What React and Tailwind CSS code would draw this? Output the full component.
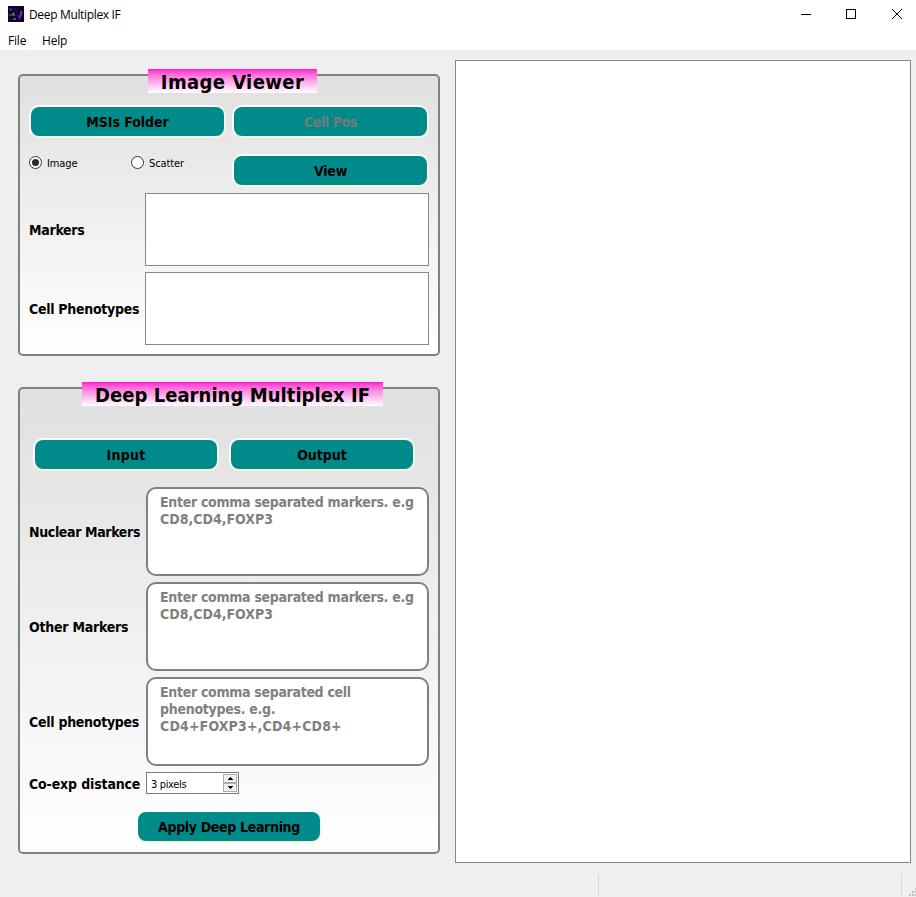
import React from "react";

const UI = "font-['Open_Sans','Noto_Sans',sans-serif]";
const TAHOMA = "font-['DejaVu_Sans_Condensed','DejaVu_Sans',sans-serif]";

function PushButton({ children, className = "", disabled = false }) {
  return (
    <button
      disabled={disabled}
      className={`flex h-[33px] items-center justify-center rounded-[10px] border-2 border-t-white border-l-white border-r-[#f7f6de] border-b-[#f7f6de] bg-[#008b8b] pt-[2px] text-[14px] font-bold whitespace-nowrap ${disabled ? "text-[#787878]" : "text-black"} ${className}`}
    >
      {children}
    </button>
  );
}

function GroupTitle({ children, className }) {
  return (
    <h2
      className={`relative z-10 flex h-6 items-center justify-center bg-linear-to-b from-[#ff0ace] to-white pt-[2px] text-[20px] font-bold whitespace-nowrap ${className}`}
    >
      {children}
    </h2>
  );
}

function Label({ children, className = "" }) {
  return (
    <div className={`shrink-0 pt-px text-[14px] leading-5 font-bold whitespace-nowrap ${className}`}>
      {children}
    </div>
  );
}

function Radio({ children, checked = false, className = "" }) {
  return (
    <div className={`mt-[2px] flex h-[13px] items-center gap-[5px] ${className}`}>
      <span className="flex size-[13px] items-center justify-center rounded-full border border-[#333] bg-white">
        {checked && <span className="size-[7px] rounded-full bg-[#2b2b2b]" />}
      </span>
      <span className="pt-[2px] text-[11px] leading-[13px] tracking-[-0.1px]">{children}</span>
    </div>
  );
}

function TextBox({ children }) {
  return (
    <div className="h-[89px] w-[283px] shrink-0 rounded-[10px] border-2 border-[#808080] bg-white px-3 pt-[5px] text-[14px] leading-[17px] font-bold whitespace-nowrap text-[#808080]">
      {children}
    </div>
  );
}

function MarkersHint() {
  return (
    <>
      <p className="tracking-[-0.3px]">Enter comma separated markers. e.g</p>
      <p>CD8,CD4,FOXP3</p>
    </>
  );
}

function ListBox() {
  return <div className="h-[73px] w-[284px] border border-[#828790] bg-white" />;
}

function AppIcon() {
  return (
    <svg width="16" height="16" viewBox="0 0 16 16" className="-mt-0.5">
      <rect width="16" height="16" fill="#0c0626" />
      <path d="M6 3l3 1M9 8l1 2M1 13l2 1M10 13l3 1" stroke="#1f1555" strokeWidth="2" />
      <path d="M1.5 2.5l2.5 2M1 8l1.5 2" stroke="#7a1aa0" strokeWidth="1.8" />
      <path d="M13.5 5l-.8 4-1.7 3" stroke="#9a26d4" strokeWidth="1.8" fill="none" />
      <path d="M3.5 9.5l2-2 1 2.5M5 13h3" stroke="#54805a" strokeWidth="1.7" fill="none" />
    </svg>
  );
}

function TitleBar() {
  return (
    <header className={`h-[50px] bg-white text-[12px] ${UI}`}>
      <div className="flex h-[30px] items-center pl-2">
        <AppIcon />
        <span className="ml-[5px] tracking-[-0.34px]">Deep Multiplex IF</span>
        <svg
          width="102"
          height="11"
          viewBox="0 0 102 11"
          className="mr-[13px] mb-px ml-auto"
          fill="none"
          stroke="#000"
          shapeRendering="crispEdges"
        >
          <path d="M0 5.5H10" />
          <rect x="45.5" y="0.5" width="9" height="9" />
          <path d="M91 0L101 10M101 0L91 10" shapeRendering="auto" />
        </svg>
      </div>
      <nav className="flex h-5 items-center pt-[2px] pl-2 tracking-[-0.2px]">
        <span className="w-[34px]">File</span>
        <span>Help</span>
      </nav>
    </header>
  );
}

function SpinBox() {
  return (
    <div className="flex h-[22px] w-[93px] items-center justify-between border border-[#7a7a7a] bg-white pr-px pl-1 text-[11px]">
      <span className="pt-1 tracking-[-0.35px]">3 pixels</span>
      <div className="flex h-[18px] w-[14px] flex-col">
        <span className="flex h-[9px] items-center justify-center border border-[#adadad] bg-[#f0f0f0]">
          <svg width="5" height="3" shapeRendering="crispEdges">
            <path d="M2 0h1v1h1v1h1v1H0V2h1V1h1z" />
          </svg>
        </span>
        <span className="flex h-[9px] items-center justify-center border border-[#adadad] bg-[#f0f0f0]">
          <svg width="5" height="3" shapeRendering="crispEdges">
            <path d="M0 0h5v1H4v1H3v1H2V2H1V1H0z" />
          </svg>
        </span>
      </div>
    </div>
  );
}

export default function App() {
  return (
    <div className={`flex h-[897px] w-[916px] flex-col overflow-hidden bg-[#efefef] text-black ${TAHOMA}`}>
      <TitleBar />
      <main className="flex h-[813px] items-start pt-[10px] pl-[18px]">
        <div className="w-[422px] shrink-0 pt-[9px]">
          <section>
            <GroupTitle className="ml-[130px] w-[169px] tracking-[0.4px]">Image Viewer</GroupTitle>
            <div className="-mt-[19px] h-[282px] rounded-[5px] border-2 border-[#808080] bg-linear-to-b from-[#e0e0e0] to-white pt-[29px] pl-[9px]">
              <div className="flex gap-[6px]">
                <PushButton className="w-[197px] tracking-[-0.04px]">MSIs Folder</PushButton>
                <PushButton className="w-[197px] tracking-[-0.35px]" disabled>Cell Pos</PushButton>
              </div>
              <div className="mt-4 flex">
                <Radio checked className="w-[102px]">Image</Radio>
                <Radio className="w-[101px]">Scatter</Radio>
                <PushButton className="w-[197px] tracking-[-0.2px]">View</PushButton>
              </div>
              <div className="mt-[6px] flex items-center">
                <Label className="w-[116px] tracking-[-0.29px]">Markers</Label>
                <ListBox />
              </div>
              <div className="mt-[6px] flex items-center">
                <Label className="w-[116px] tracking-[-0.29px]">Cell Phenotypes</Label>
                <ListBox />
              </div>
            </div>
          </section>
          <section className="mt-[26px]">
            <GroupTitle className="ml-[64px] w-[301px] tracking-[0.05px]">Deep Learning Multiplex IF</GroupTitle>
            <div className="-mt-[19px] h-[467px] rounded-[5px] border-2 border-[#808080] bg-linear-to-b from-[#e0e0e0] to-white pt-[49px] pl-[9px]">
              <div className="flex gap-[10px] pl-1">
                <PushButton className="w-[186px] tracking-[0.3px]">Input</PushButton>
                <PushButton className="w-[186px]">Output</PushButton>
              </div>
              <div className="mt-4 flex items-center">
                <Label className="w-[117px] tracking-[-0.36px]">Nuclear Markers</Label>
                <TextBox><MarkersHint /></TextBox>
              </div>
              <div className="mt-[6px] flex items-center">
                <Label className="w-[117px] tracking-[-0.23px]">Other Markers</Label>
                <TextBox><MarkersHint /></TextBox>
              </div>
              <div className="mt-[6px] flex items-center">
                <Label className="w-[117px] tracking-[-0.28px]">Cell phenotypes</Label>
                <TextBox>
                  <p className="tracking-[-0.31px]">Enter comma separated cell</p>
                  <p className="tracking-[-0.28px]">phenotypes. e.g.</p>
                  <p className="tracking-[0.15px]">CD4+FOXP3+,CD4+CD8+</p>
                </TextBox>
              </div>
              <div className="mt-[6px] flex items-center">
                <Label className="mt-px w-[117px] tracking-[-0.15px]">Co-exp distance</Label>
                <SpinBox />
              </div>
              <PushButton className="mt-4 ml-[107px] w-[186px] tracking-[-0.33px]">Apply Deep Learning</PushButton>
            </div>
          </section>
        </div>
        <div className="ml-[15px] h-[803px] w-[456px] shrink-0 border border-[#828790] bg-white" />
      </main>
      <footer className="flex h-[34px] items-start pt-[11px]">
        <div className="ml-[598px] h-[22px] w-px bg-[#d7d7d7]" />
        <div className="ml-[302px] h-[22px] w-px bg-[#d7d7d7]" />
        <svg width="7" height="8" viewBox="0 0 7 8" className="mt-[14px] ml-[7px]" fill="#bfbfbf">
          <path d="M0 6h2v2H0zM3 6h2v2H3zM6 6h1v2H6zM3 3h2v2H3zM6 3h1v2H6zM6 0h1v2H6z" />
        </svg>
      </footer>
    </div>
  );
}
